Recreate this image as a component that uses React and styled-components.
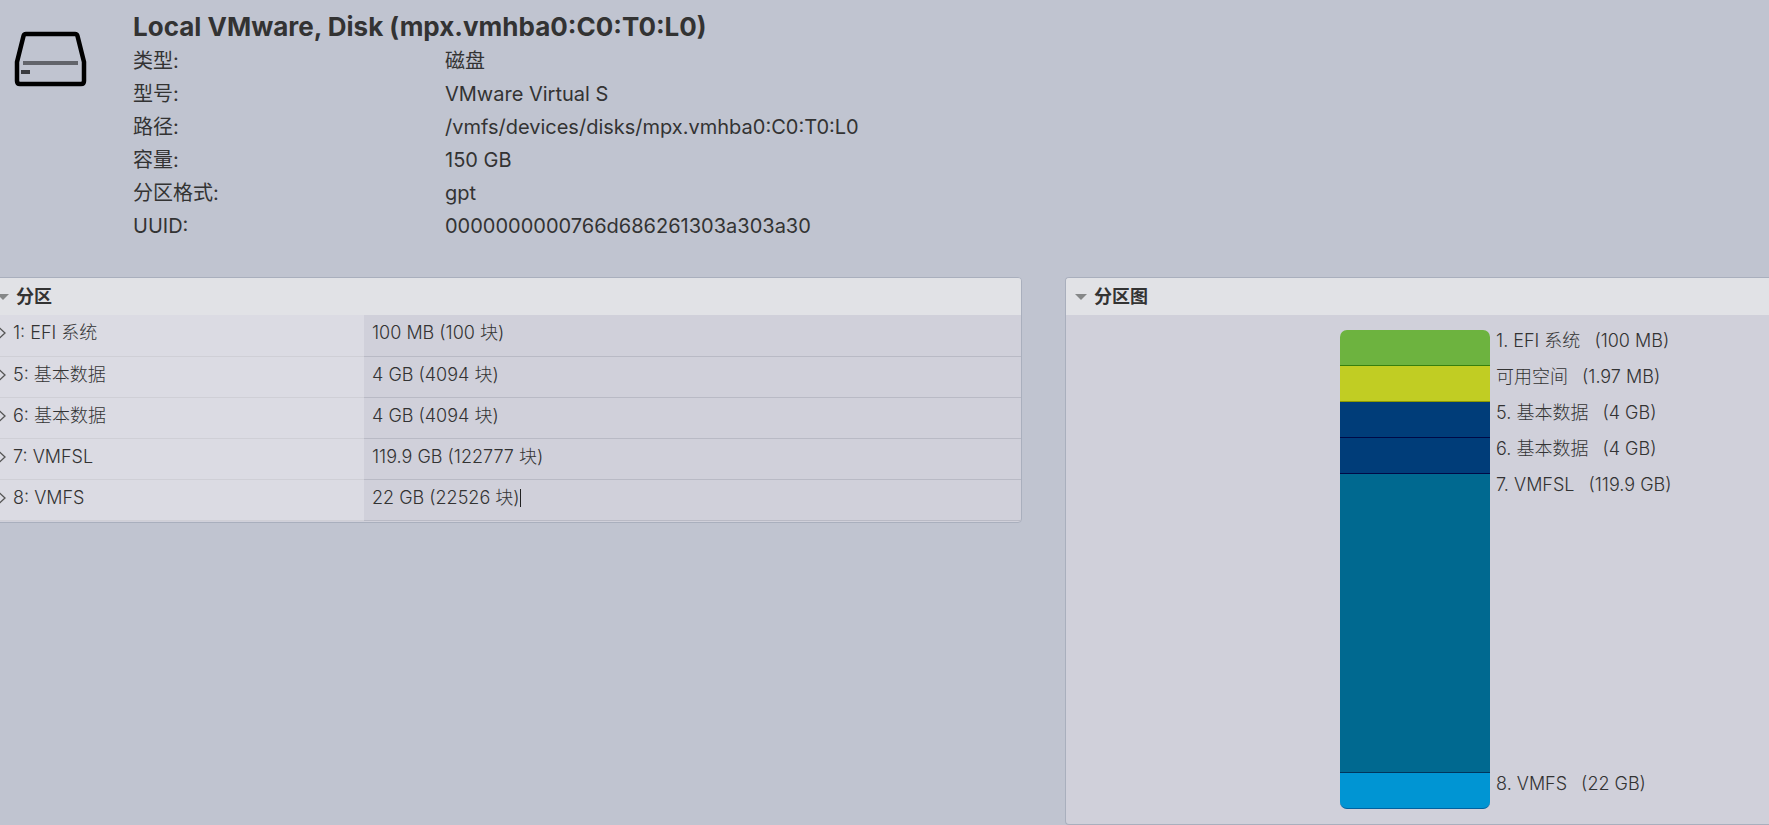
import React, { useState } from 'react'
import styled, { createGlobalStyle } from 'styled-components'

const GlobalStyle = createGlobalStyle`
    * {
        box-sizing: border-box;
    }
    body {
        margin: 0;
        overflow-x: hidden;
        background-color: #c0c4d0;
        color: #333;
        font-family: Inter, "Noto Sans CJK SC", sans-serif;
    }
`

const Header = styled.header`
    display: flex;
    align-items: flex-start;
    padding: 8px 14px 34px;
`

const DiskIcon = styled.svg`
    flex: none;
    width: 73px;
    height: 56px;
    margin: 23px 46px 0 0;
`

const Title = styled.h1`
    margin: 0;
    font-size: 26px;
    font-weight: 700;
    line-height: 37px;
`

const Details = styled.dl`
    display: grid;
    grid-template-columns: 312px auto;
    margin: 0;
    font-size: 20px;
    font-weight: 400;
    line-height: 33px;
`

const Term = styled.dt`
    margin: 0;
`

const Detail = styled.dd`
    margin: 0;
`

/* scrolled a little to the right, so the left panel starts outside the window */
const Panels = styled.main`
    display: grid;
    grid-template-columns: minmax(0, 50fr) minmax(0, 34fr);
    gap: 43px;
    align-items: start;
    margin-left: -13px;
`

const Panel = styled.section`
    overflow: hidden;
    border: 1px solid #a9afbd;
    border-right-width: ${props => props.$open ? 0 : 1}px;
    border-radius: ${props => props.$open ? '4px 0 0 4px' : '4px'};
    background-color: #d0d0da;
`

const PanelHeading = styled.h2`
    margin: 0;
    font-size: 18px;
    line-height: 37px;
    background-color: #e1e2e6;
`

const PanelToggle = styled.button`
    display: flex;
    align-items: center;
    gap: 7px;
    width: 100%;
    padding: 0 9px;
    border: none;
    background: none;
    color: inherit;
    font: inherit;
    font-weight: 700;
    cursor: pointer;
`

const Caret = styled.span`
    border-top: 6px solid #858788;
    border-left: 6px solid transparent;
    border-right: 6px solid transparent;
`

const PartitionTable = styled.table`
    width: 100%;
    border-collapse: collapse;
    table-layout: fixed;
    margin-bottom: 1px;
    font-size: 18px;
    line-height: 22px;
`

const NameCell = styled.th`
    width: 376px;
    height: 41px;
    padding: 0 0 4px 7px;
    border-bottom: 1px solid #cfcfd6;
    background-color: #dbdbe3;
    font-weight: 300;
    text-align: left;
`

const SizeCell = styled.td`
    padding: 0 0 4px 8px;
    border-bottom: 1px solid #b9bac5;
    font-weight: 300;
`

const RowToggle = styled.button`
    display: flex;
    align-items: center;
    gap: 7px;
    padding: 0;
    border: none;
    background: none;
    color: inherit;
    font: inherit;
    cursor: pointer;
`

const Chevron = styled.svg`
    width: 11px;
    height: 12px;
`

const TextCursor = styled.span`
    display: inline-block;
    width: 1px;
    height: 18px;
    background-color: #222;
    vertical-align: -3px;
`

const Diagram = styled.ul`
    margin: 0;
    padding: 15px 5px 15px 0;
    list-style: none;
`

const DiagramRow = styled.li`
    display: grid;
    grid-template-columns: 1fr 150px 1fr;
    font-size: 18px;
    font-weight: 300;
    line-height: 22px;
`

const Block = styled.div`
    grid-column: 2;
    height: ${props => props.$height}px;
    background-color: ${props => props.$color};
    border-bottom: 1px solid ${props => props.$edge};

    ${DiagramRow}:first-child & {
        border-radius: 7px 7px 0 0;
    }
    ${DiagramRow}:last-child & {
        border-radius: 0 0 7px 7px;
    }
`

const Legend = styled.div`
    display: flex;
    gap: 14px;
    padding-left: 6px;
    white-space: nowrap;
`

const details = [
    ['类型:', '磁盘'],
    ['型号:', 'VMware Virtual S'],
    ['路径:', '/vmfs/devices/disks/mpx.vmhba0:C0:T0:L0'],
    ['容量:', '150 GB'],
    ['分区格式:', 'gpt'],
    ['UUID:', '0000000000766d686261303a303a30'],
]

const partitions = [
    { id: 1, name: 'EFI 系统', size: '100 MB (100 块)' },
    { id: 5, name: '基本数据', size: '4 GB (4094 块)' },
    { id: 6, name: '基本数据', size: '4 GB (4094 块)' },
    { id: 7, name: 'VMFSL', size: '119.9 GB (122777 块)' },
    { id: 8, name: 'VMFS', size: '22 GB (22526 块)', editing: true },
]

const blocks = [
    { label: '1. EFI 系统', size: '100 MB', height: 36, color: '#6db33f', edge: '#36800e' },
    { label: '可用空间', size: '1.97 MB', height: 36, color: '#c1cd23', edge: '#8e9a00' },
    { label: '5. 基本数据', size: '4 GB', height: 36, color: '#003d79', edge: '#000a46' },
    { label: '6. 基本数据', size: '4 GB', height: 36, color: '#003d79', edge: '#000a46' },
    { label: '7. VMFSL', size: '119.9 GB', height: 299, color: '#006990', edge: '#00365d' },
    { label: '8. VMFS', size: '22 GB', height: 36, color: '#0095d3', edge: '#0062a0' },
]

function App() {
    const [listOpen, setListOpen] = useState(true);
    const [diagramOpen, setDiagramOpen] = useState(true);

    return (
        <>
        <GlobalStyle />
        <Header>
            <DiskIcon viewBox="0 0 73 56" fill="none" aria-hidden="true">
                <path d="M12 3H61Q63 3 63.500 5L70 31V50Q70 53 67 53H6Q3 53 3 50V31L9.500 5Q10 3 12 3Z" stroke="#000" strokeWidth="4.500" />
                <path d="M9 32H64" stroke="#62646a" strokeWidth="4" />
                <path d="M7 41H16" stroke="#3b3c40" strokeWidth="4" />
            </DiskIcon>
            <div>
                <Title>Local VMware, Disk (mpx.vmhba0:C0:T0:L0)</Title>
                <Details>
                    {details.map(([term, value]) => (
                        <React.Fragment key={term}>
                            <Term>{term}</Term>
                            <Detail>{value}</Detail>
                        </React.Fragment>
                    ))}
                </Details>
            </div>
        </Header>
        <Panels>
            <Panel>
                <PanelHeading>
                    <PanelToggle aria-expanded={listOpen} onClick={() => setListOpen(!listOpen)}>
                        <Caret />
                        分区
                    </PanelToggle>
                </PanelHeading>
                {listOpen &&
                <PartitionTable>
                    <tbody>
                    {partitions.map(part => (
                        <tr key={part.id}>
                            <NameCell scope="row">
                                <RowToggle>
                                    <Chevron viewBox="0 0 11 12" fill="none" aria-hidden="true">
                                        <path d="M4.500 1L10 6L4.500 11" stroke="#555" strokeWidth="1.300" />
                                    </Chevron>
                                    {part.id}: {part.name}
                                </RowToggle>
                            </NameCell>
                            <SizeCell>
                                {part.size}
                                {part.editing && <TextCursor />}
                            </SizeCell>
                        </tr>
                    ))}
                    </tbody>
                </PartitionTable>
                }
            </Panel>
            <Panel $open>
                <PanelHeading>
                    <PanelToggle aria-expanded={diagramOpen} onClick={() => setDiagramOpen(!diagramOpen)}>
                        <Caret />
                        分区图
                    </PanelToggle>
                </PanelHeading>
                {diagramOpen &&
                <Diagram>
                    {blocks.map(block => (
                        <DiagramRow key={block.label}>
                            <Block $height={block.height} $color={block.color} $edge={block.edge} />
                            <Legend>
                                <span>{block.label}</span>
                                <span>({block.size})</span>
                            </Legend>
                        </DiagramRow>
                    ))}
                </Diagram>
                }
            </Panel>
        </Panels>
        </>
    );
}

export default App;
